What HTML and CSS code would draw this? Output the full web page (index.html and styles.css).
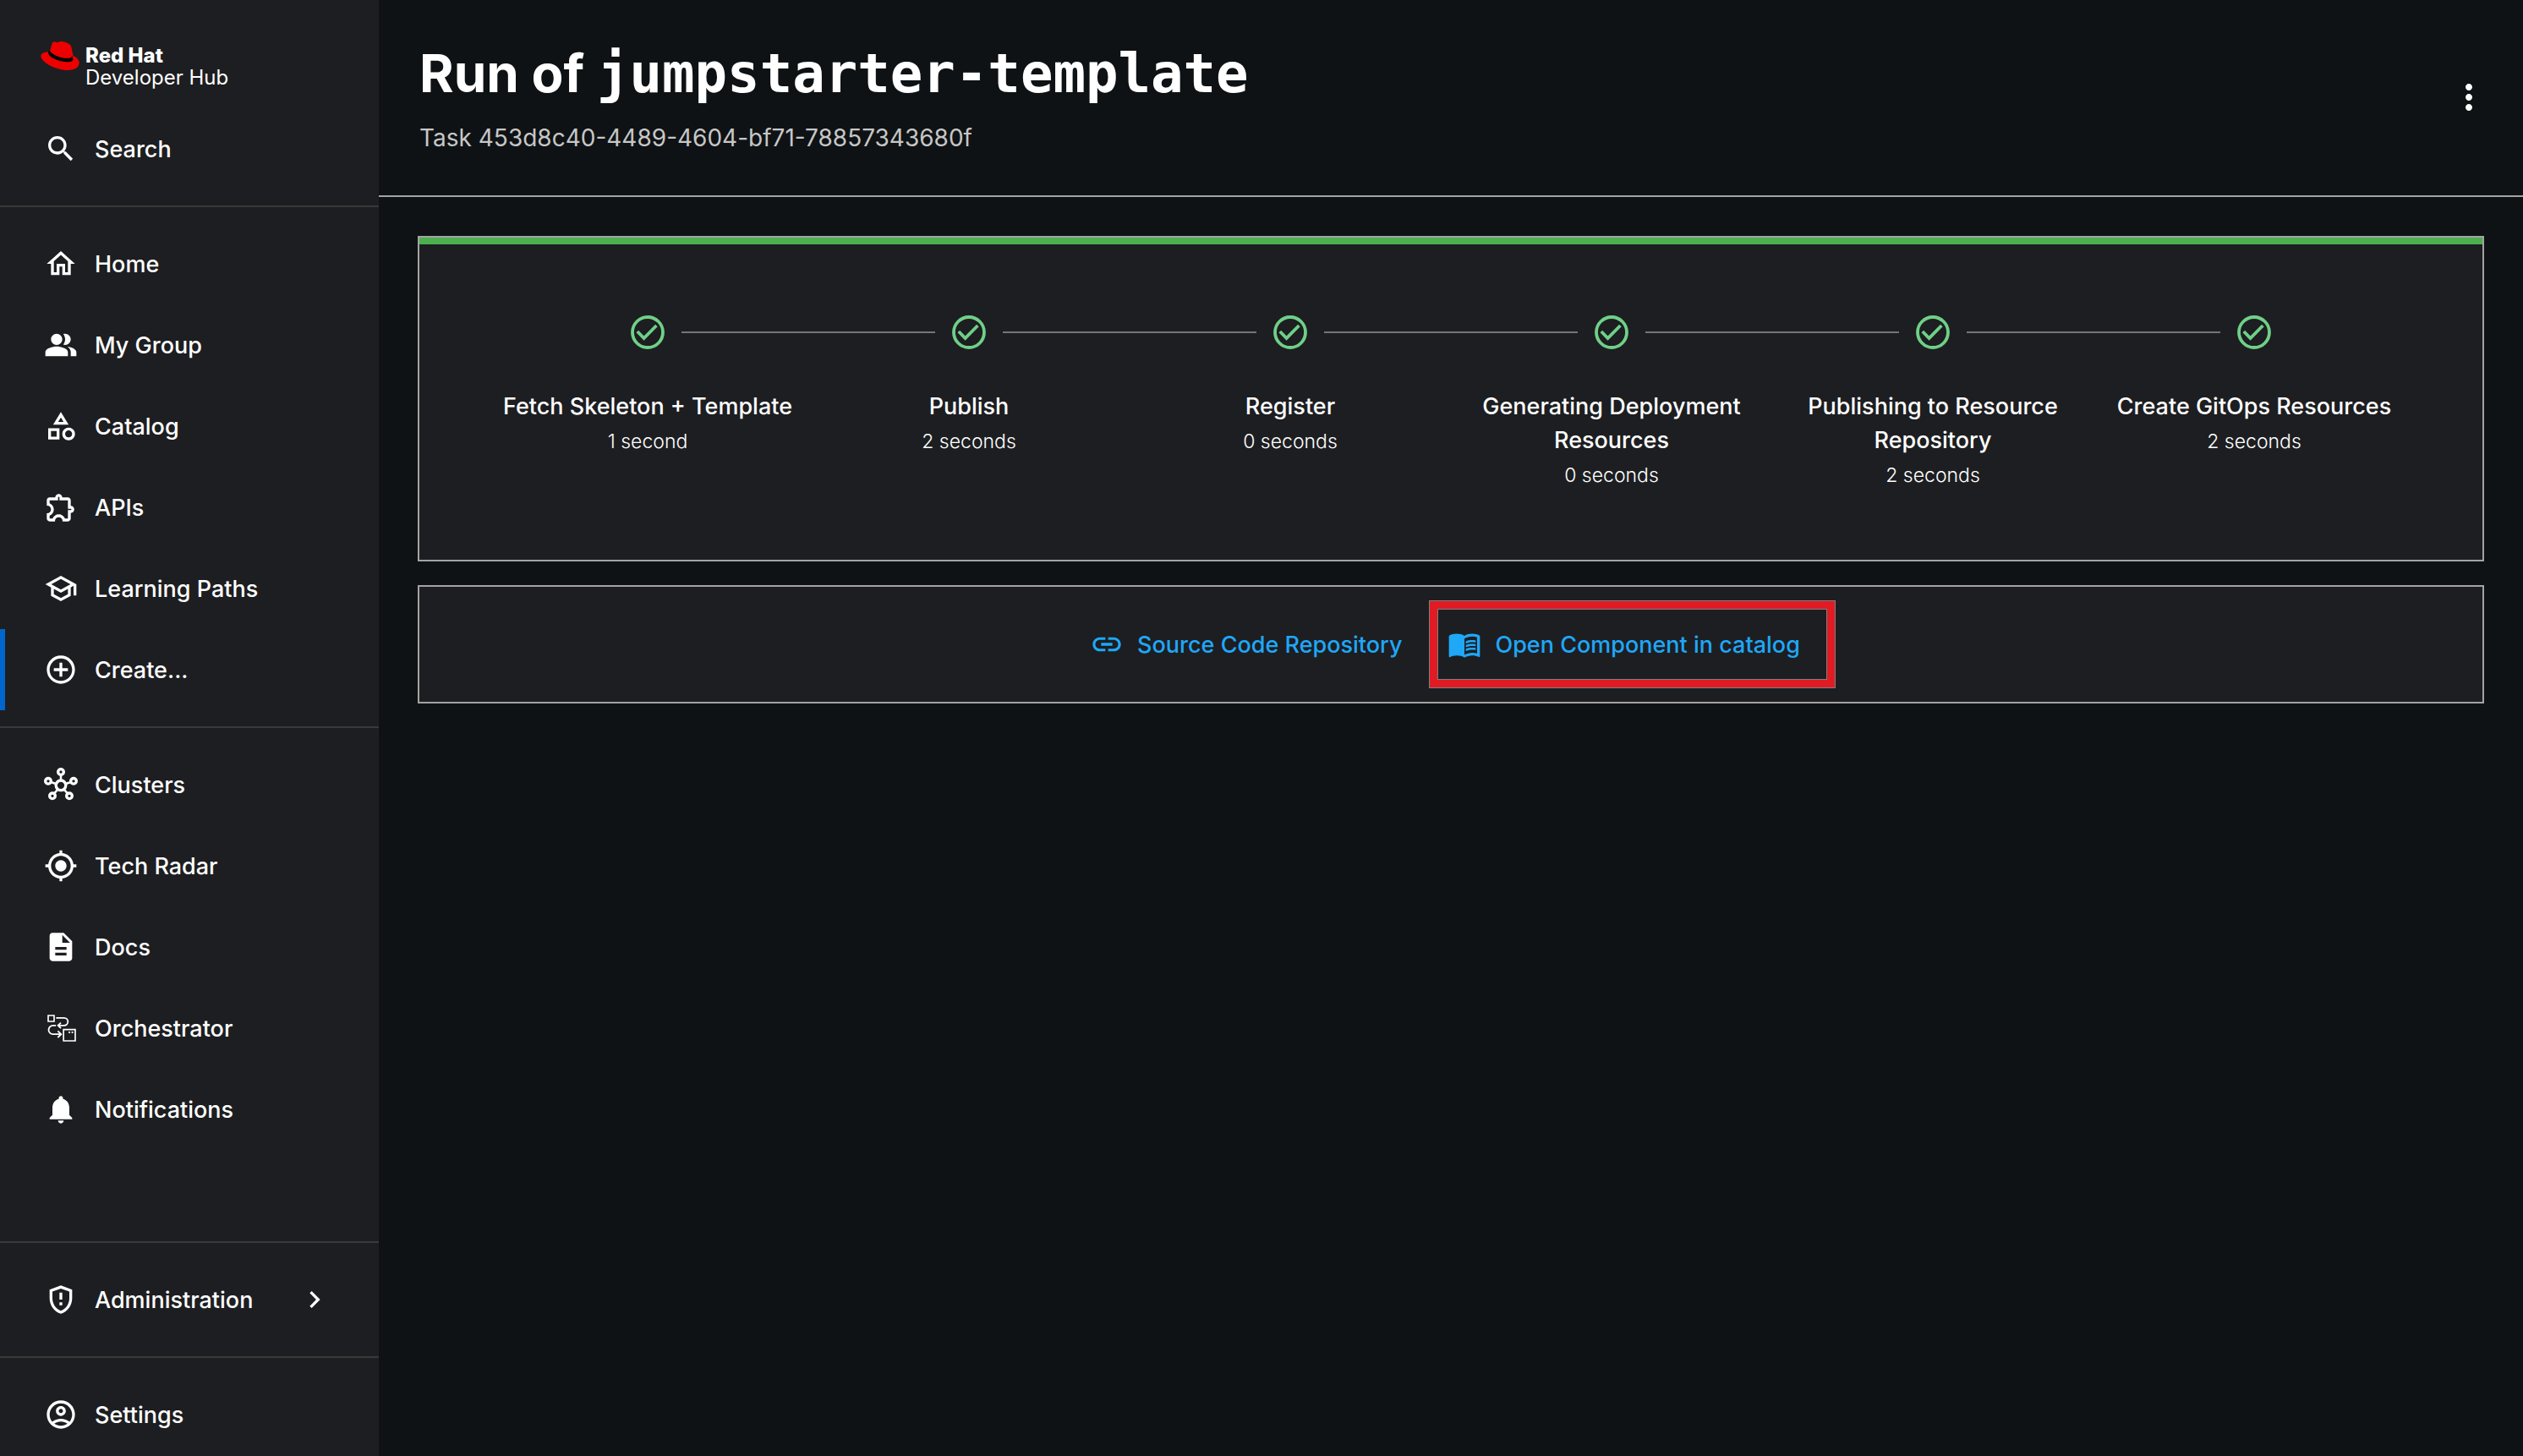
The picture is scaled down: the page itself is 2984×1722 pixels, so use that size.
FILE: index.html
```html
<!DOCTYPE html>
<html lang="en">
<head>
<meta charset="utf-8">
<title>Run of jumpstarter-template</title>
<link rel="stylesheet" href="styles.css">
</head>
<body>
<div class="app">
  <aside class="sidebar">
    <a class="brand" href="#">
      <svg class="brand-hat" viewBox="0 0 46 36" aria-hidden="true">
        <path fill="#e00" d="M9.500 13.500L11.300 11.500 13.400 4C13.900 1.800 15.200 1 17 1.500l3 .7c1.300.2 2-1.200 4.300-1.200 3 0 9.200 2.200 11 4.300 1 1.200 1.200 3 1.500 4.500L38.500 18C42.500 19.800 46 22.800 45.700 26.800 45.200 32.700 39 35.200 31.500 35 18 34.500.8 26 .4 18.400.2 15.200 3.800 13.600 9.500 13.500z"/>
        <path fill="#000" d="M10.900 11.700c1.300 4.500 12.600 9.200 20.600 9.100 3 0 5.600-.8 6-2.800l1 4.200c-.4 2.400-3.700 3-7 3-8.800 0-21.300-5-22.400-10.200-.2-1.200.4-2.300 1.800-3.300z"/>
      </svg>
      <span class="brand-text"><strong>Red Hat</strong><span>Developer Hub</span></span>
    </a>
    <nav class="group">
      <a class="item" href="#"><svg class="icon" viewBox="0 0 24 24"><path d="M15.500 14h-.79l-.28-.27C15.410 12.590 16 11.110 16 9.500 16 5.910 13.090 3 9.500 3S3 5.910 3 9.500 5.910 16 9.500 16c1.610 0 3.090-.59 4.230-1.570l.27.28v.79l5 4.990L20.490 19l-4.990-5zm-6 0C7.010 14 5 11.990 5 9.500S7.010 5 9.500 5 14 7.010 14 9.500 11.990 14 9.500 14z"/></svg>Search</a>
    </nav>
    <nav class="group">
      <a class="item" href="#"><svg class="icon" viewBox="0 0 24 24"><path d="M12 5.690l5 4.500V18h-2v-6H9v6H7v-7.810l5-4.500M12 3L2 12h3v8h6v-6h2v6h6v-8h3L12 3z"/></svg>Home</a>
      <a class="item" href="#"><svg class="icon" viewBox="0 0 24 24"><path d="M16.670 13.130C18.040 14.060 19 15.320 19 17v3h4v-3c0-2.180-3.570-3.470-6.330-3.870zM15 12c2.210 0 4-1.790 4-4s-1.790-4-4-4c-.47 0-.91.1-1.330.24C14.500 5.270 15 6.580 15 8s-.5 2.730-1.330 3.760c.42.14.86.24 1.330.24zM9 12c2.210 0 4-1.790 4-4s-1.790-4-4-4-4 1.790-4 4 1.790 4 4 4zm0 1c-2.670 0-8 1.340-8 4v3h16v-3c0-2.660-5.330-4-8-4z"/></svg>My Group</a>
      <a class="item" href="#"><svg class="icon" viewBox="0 0 24 24"><path d="M12 2l-5.500 9h11L12 2zm0 3.840L13.930 9h-3.870L12 5.840zM17.500 13c-2.490 0-4.500 2.010-4.500 4.500s2.010 4.500 4.500 4.500 4.500-2.010 4.500-4.500-2.010-4.500-4.500-4.500zm0 7c-1.380 0-2.500-1.120-2.500-2.500s1.120-2.500 2.500-2.500 2.500 1.120 2.500 2.500-1.120 2.500-2.500 2.500zM3 21.500h8v-8H3v8zm2-6h4v4H5v-4z"/></svg>Catalog</a>
      <a class="item" href="#"><svg class="icon" viewBox="0 0 24 24"><path d="M10.500 4.500c.28 0 .5.22.5.5v2h6v6h2c.28 0 .5.220.5.500s-.22.5-.5.5h-2v6h-2.120c-.68-1.750-2.390-3-4.380-3s-3.700 1.250-4.380 3H4v-2.120c1.750-.68 3-2.390 3-4.380 0-1.990-1.240-3.700-2.990-4.380L4 7h6V5c0-.28.22-.5.5-.5m0-2C9.120 2.500 8 3.620 8 5H4c-1.100 0-1.990.9-1.990 2v3.800h.29c1.490 0 2.700 1.210 2.700 2.700s-1.210 2.700-2.700 2.700H2V20c0 1.100.9 2 2 2h3.800v-.3c0-1.490 1.210-2.700 2.700-2.700s2.700 1.210 2.700 2.700v.3H17c1.100 0 2-.9 2-2v-4c1.380 0 2.500-1.120 2.500-2.500S20.380 11 19 11V7c0-1.100-.9-2-2-2h-4c0-1.380-1.120-2.500-2.500-2.500z"/></svg>APIs</a>
      <a class="item" href="#"><svg class="icon" viewBox="0 0 24 24"><path d="M12 3L1 9l4 2.180v6L12 21l7-3.820v-6l2-1.090V17h2V9L12 3zm6.820 6L12 12.720 5.180 9 12 5.280 18.820 9zM17 15.990l-5 2.730-5-2.730v-3.720L12 15l5-2.730v3.720z"/></svg>Learning Paths</a>
      <a class="item item-active" href="#" aria-current="page"><svg class="icon" viewBox="0 0 24 24"><path d="M13 7h-2v4H7v2h4v4h2v-4h4v-2h-4V7zm-1-5C6.480 2 2 6.480 2 12s4.480 10 10 10 10-4.480 10-10S17.520 2 12 2zm0 18c-4.410 0-8-3.590-8-8s3.590-8 8-8 8 3.590 8 8-3.590 8-8 8z"/></svg>Create...</a>
    </nav>
    <nav class="group group-last">
      <a class="item" href="#"><svg class="icon" viewBox="0 0 24 24"><g fill="none" stroke="currentColor" stroke-width="2"><circle cx="12" cy="12.500" r="3.500"/><circle cx="12" cy="3" r="2"/><circle cx="3" cy="9.500" r="2"/><circle cx="21" cy="9.500" r="2"/><circle cx="6" cy="20" r="2"/><circle cx="18" cy="20" r="2"/></g><path fill="none" stroke="currentColor" stroke-width="1.500" d="M12 5v4M4.900 10.200l3.700 1.200M19.100 10.200l-3.700 1.200M7.200 18.400l2.600-3.100M16.800 18.400l-2.600-3.100"/></svg>Clusters</a>
      <a class="item" href="#"><svg class="icon" viewBox="0 0 24 24"><path d="M12 8c-2.210 0-4 1.790-4 4s1.790 4 4 4 4-1.790 4-4-1.790-4-4-4zm8.940 3c-.46-4.170-3.770-7.480-7.940-7.940V1h-2v2.060C6.830 3.520 3.520 6.830 3.060 11H1v2h2.060c.46 4.170 3.770 7.480 7.940 7.940V23h2v-2.060c4.170-.46 7.480-3.770 7.940-7.940H23v-2h-2.060zM12 19c-3.870 0-7-3.130-7-7s3.130-7 7-7 7 3.130 7 7-3.130 7-7 7z"/></svg>Tech Radar</a>
      <a class="item" href="#"><svg class="icon" viewBox="0 0 24 24"><path d="M14 2H6c-1.100 0-1.990.9-1.990 2L4 20c0 1.100.89 2 1.990 2H18c1.100 0 2-.9 2-2V8l-6-6zm2 16H8v-2h8v2zm0-4H8v-2h8v2zm-3-5V3.500L18.500 9H13z"/></svg>Docs</a>
      <a class="item" href="#"><svg class="icon" viewBox="0 0 24 24"><g fill="none" stroke="currentColor"><path d="M3 3h4.200v4.200H3z"/><path d="M13.900 13h8.300v8h-8.300z"/><path stroke-width="1.100" d="M8.600 4.700h5.700a2.700 2.700 0 0 1 0 5.400h-4M12 8.200l-2 1.900 2 1.900M8.500 10.100H6.400a3.100 3.100 0 0 0 0 6.200h5.300M9.800 14l2.400 2.300-2.400 2.300"/></g><path d="M17.500 14.400h1.100v1.200h-1.100zM19.600 14.400h1.100v1.200h-1.100z"/></svg>Orchestrator</a>
      <a class="item" href="#"><svg class="icon" viewBox="0 0 24 24"><path d="M12 22c1.100 0 2-.9 2-2h-4c0 1.100.89 2 2 2zm6-6v-5c0-3.070-1.640-5.640-4.500-6.320V4c0-.83-.67-1.500-1.500-1.500s-1.500.67-1.500 1.500v.68C7.630 5.360 6 7.920 6 11v5l-2 2v1h16v-1l-2-2z"/></svg>Notifications</a>
    </nav>
    <nav class="group">
      <a class="item" href="#"><svg class="icon" viewBox="0 0 24 24"><path d="M12 2L4 5v6.090c0 5.050 3.410 9.760 8 10.910 4.590-1.150 8-5.860 8-10.910V5l-8-3zm6 9.090c0 4-2.550 7.700-6 8.830-3.450-1.130-6-4.820-6-8.830V6.310l6-2.120 6 2.120v4.780zM11 7h2v5h-2zM11 14h2v2h-2z"/></svg>Administration<svg class="icon chevron" viewBox="0 0 24 24"><path d="M10 6L8.590 7.410 13.170 12l-4.580 4.590L10 18l6-6z"/></svg></a>
    </nav>
    <nav class="group">
      <a class="item" href="#"><svg class="icon" viewBox="0 0 24 24"><path d="M12 2C6.480 2 2 6.480 2 12s4.480 10 10 10 10-4.480 10-10S17.520 2 12 2zM7.350 18.500C8.660 17.560 10.260 17 12 17s3.340.56 4.650 1.500C15.340 19.440 13.740 20 12 20s-3.340-.56-4.650-1.500zm10.790-1.380C16.450 15.800 14.320 15 12 15s-4.450.8-6.140 2.120C4.700 15.730 4 13.950 4 12c0-4.420 3.580-8 8-8s8 3.580 8 8c0 1.950-.7 3.730-1.860 5.120zM12 6c-1.930 0-3.500 1.570-3.500 3.500S10.070 13 12 13s3.500-1.570 3.500-3.500S13.930 6 12 6zm0 5c-.83 0-1.500-.67-1.500-1.500S11.170 8 12 8s1.500.67 1.500 1.500S12.830 11 12 11z"/></svg>Settings</a>
    </nav>
  </aside>

  <main class="main">
    <header class="header">
      <div>
        <h1 class="title">Run of <code>jumpstarter-template</code></h1>
        <p class="subtitle">Task 453d8c40-4489-4604-bf71-78857343680f</p>
      </div>
      <button class="more" type="button" aria-label="More options"><svg viewBox="0 0 24 24"><path d="M12 8c1.100 0 2-.9 2-2s-.9-2-2-2-2 .9-2 2 .9 2 2 2zm0 2c-1.100 0-2 .9-2 2s.9 2 2 2 2-.9 2-2-.9-2-2-2zm0 6c-1.100 0-2 .9-2 2s.9 2 2 2 2-.9 2-2-.9-2-2-2z"/></svg></button>
    </header>

    <div class="content">
      <section class="card">
        <div class="progress" role="progressbar" aria-label="Task progress" aria-valuenow="100"></div>
        <ol class="steps">
          <li class="step"><span class="track"><svg class="check" viewBox="0 0 24 24"><use href="#check"/></svg></span><span class="label">Fetch Skeleton + Template</span><span class="time">1 second</span></li>
          <li class="step"><span class="track"><svg class="check" viewBox="0 0 24 24"><use href="#check"/></svg></span><span class="label">Publish</span><span class="time">2 seconds</span></li>
          <li class="step"><span class="track"><svg class="check" viewBox="0 0 24 24"><use href="#check"/></svg></span><span class="label">Register</span><span class="time">0 seconds</span></li>
          <li class="step"><span class="track"><svg class="check" viewBox="0 0 24 24"><use href="#check"/></svg></span><span class="label">Generating Deployment Resources</span><span class="time">0 seconds</span></li>
          <li class="step"><span class="track"><svg class="check" viewBox="0 0 24 24"><use href="#check"/></svg></span><span class="label">Publishing to Resource Repository</span><span class="time">2 seconds</span></li>
          <li class="step"><span class="track"><svg class="check" viewBox="0 0 24 24"><use href="#check"/></svg></span><span class="label">Create GitOps Resources</span><span class="time">2 seconds</span></li>
        </ol>
      </section>

      <section class="card links">
        <a class="link" href="#"><svg class="icon" viewBox="0 0 24 24"><path d="M3.900 12c0-1.710 1.390-3.100 3.100-3.100h4V7H7c-2.760 0-5 2.240-5 5s2.240 5 5 5h4v-1.900H7c-1.710 0-3.100-1.390-3.100-3.100zM8 13h8v-2H8v2zm9-6h-4v1.900h4c1.710 0 3.100 1.390 3.100 3.100s-1.390 3.100-3.100 3.100h-4V17h4c2.760 0 5-2.240 5-5s-2.240-5-5-5z"/></svg>Source Code Repository</a>
        <a class="link link-marked" href="#"><svg class="icon" viewBox="0 0 24 24"><path d="M21 5c-1.110-.35-2.330-.5-3.500-.5-1.950 0-4.050.4-5.500 1.500-1.450-1.100-3.550-1.500-5.500-1.500S2.450 4.900 1 6v14.650c0 .25.25.5.5.5.1 0 .15-.05.25-.05C3.100 20.450 5.050 20 6.500 20c1.950 0 4.050.4 5.500 1.500 1.350-.85 3.800-1.500 5.500-1.500 1.650 0 3.350.3 4.750 1.050.1.050.15.050.25.050.25 0 .5-.25.5-.5V6c-.6-.45-1.250-.75-2-1zm0 13.500c-1.100-.35-2.300-.5-3.500-.5-1.700 0-4.150.65-5.500 1.500V8c1.350-.85 3.800-1.500 5.500-1.500 1.200 0 2.400.15 3.500.5v11.500z"/><path d="M17.500 10.500c.88 0 1.730.09 2.500.26V9.240c-.79-.15-1.640-.24-2.500-.24-1.700 0-3.240.29-4.500.83v1.660c1.130-.64 2.700-.99 4.500-.99zM13 12.490v1.660c1.130-.64 2.700-.99 4.500-.99.88 0 1.730.09 2.500.26V11.900c-.79-.15-1.640-.24-2.500-.24-1.700 0-3.240.3-4.500.83zM17.500 14.330c-1.700 0-3.240.29-4.500.83v1.660c1.130-.64 2.700-.99 4.500-.99.88 0 1.730.09 2.500.26v-1.520c-.79-.16-1.640-.24-2.500-.24z"/></svg>Open Component in catalog</a>
      </section>
    </div>
  </main>
</div>
<svg class="defs" aria-hidden="true"><symbol id="check" viewBox="0 0 24 24"><g fill="none" stroke="currentColor" stroke-width="1.900"><circle cx="12" cy="12" r="9"/><path d="M5.900 11.500L9.800 15.500 17.200 8"/></g></symbol></svg>
</body>
</html>
```

FILE: styles.css
```css
* { box-sizing: border-box; }

body {
  margin: 0;
  background: #0f1214;
  color: #fff;
  font-family: Inter, "Liberation Sans", sans-serif;
  font-size: 27px;
  font-weight: 500;
}

a { color: inherit; text-decoration: none; }
svg { fill: currentColor; }
.defs { display: none; }

.app { display: flex; min-height: 100vh; }

/* Sidebar */
.sidebar {
  display: flex;
  flex-direction: column;
  flex: 0 0 448px;
  background: #1d1e21;
}
.brand {
  display: flex;
  gap: 7px;
  height: 128px;
  padding: 48px 0 0 48px;
}
.brand-hat { width: 46px; height: 36px; }
.brand-text { display: flex; flex-direction: column; font-size: 24px; line-height: 26px; padding-top: 5px; font-weight: 400; }
.brand-text strong { font-weight: 800; }

.group { padding: 19px 0; }
.brand + .group { padding-top: 0; }
.group + .group { border-top: 2px solid #383a38; }
.group-last { flex: 1; }
.group:last-child { padding-bottom: 1px; }
.item {
  display: flex;
  align-items: center;
  gap: 20px;
  height: 96px;
  padding: 0 56px 0 52px;
}
.item-active { border-left: 6px solid #0066cc; padding-left: 46px; }
.icon { width: 40px; height: 40px; flex: none; }
.chevron { margin-left: auto; }

/* Header */
.main { flex: 1; min-width: 0; }
.header {
  display: flex;
  justify-content: space-between;
  align-items: center;
  padding: 47px 40px 48px 48px;
  border-bottom: 2px solid #a3a3a3;
}
.title { margin: 0; font-size: 62px; line-height: 80px; font-weight: 700; }
.title code { font-family: "DejaVu Sans Mono", monospace; font-size: 64px; line-height: 64px; }
.subtitle { margin: 16px 0 0; color: #c7c7c7; font-size: 28px; line-height: 40px; font-weight: 400; }
.more { width: 48px; height: 48px; padding: 0; border: 0; background: none; color: #fff; }
.more svg { display: block; }

/* Cards */
.content { display: flex; flex-direction: column; gap: 28px; padding: 46px; }
.card { border: 2px solid #a3a3a3; background: #1d1e21; }
.progress { height: 8px; background: #4caf50; }

.steps {
  display: grid;
  grid-template-columns: repeat(6, 1fr);
  margin: 0;
  padding: 80px;
  list-style: none;
  text-align: center;
}
.step { display: flex; flex-direction: column; line-height: 40px; }
.track { display: flex; align-items: center; gap: 16px; margin-bottom: 44px; }
.track::before, .track::after { content: ""; flex: 1; height: 2px; background: #757575; }
.step:first-child .track::before, .step:last-child .track::after { background: none; }
.check { width: 48px; height: 48px; color: #6fd088; }
.label { padding: 0 16px; }
.time { margin-top: 1px; font-size: 23px; font-weight: 300; }

/* Output links */
.links { display: flex; justify-content: center; align-items: center; gap: 32px; padding: 16px 0; color: #1fa7f8; }
.link { display: flex; align-items: center; gap: 16px; }
.link-marked {
  height: 104px;
  margin-right: -28px;
  padding: 0 32px 0 12px;
  border: 10px solid #e01b24;
  outline: 1px solid #808080;
  outline-offset: -1px;
  box-shadow: inset 0 0 0 1px #808080;
}
```
